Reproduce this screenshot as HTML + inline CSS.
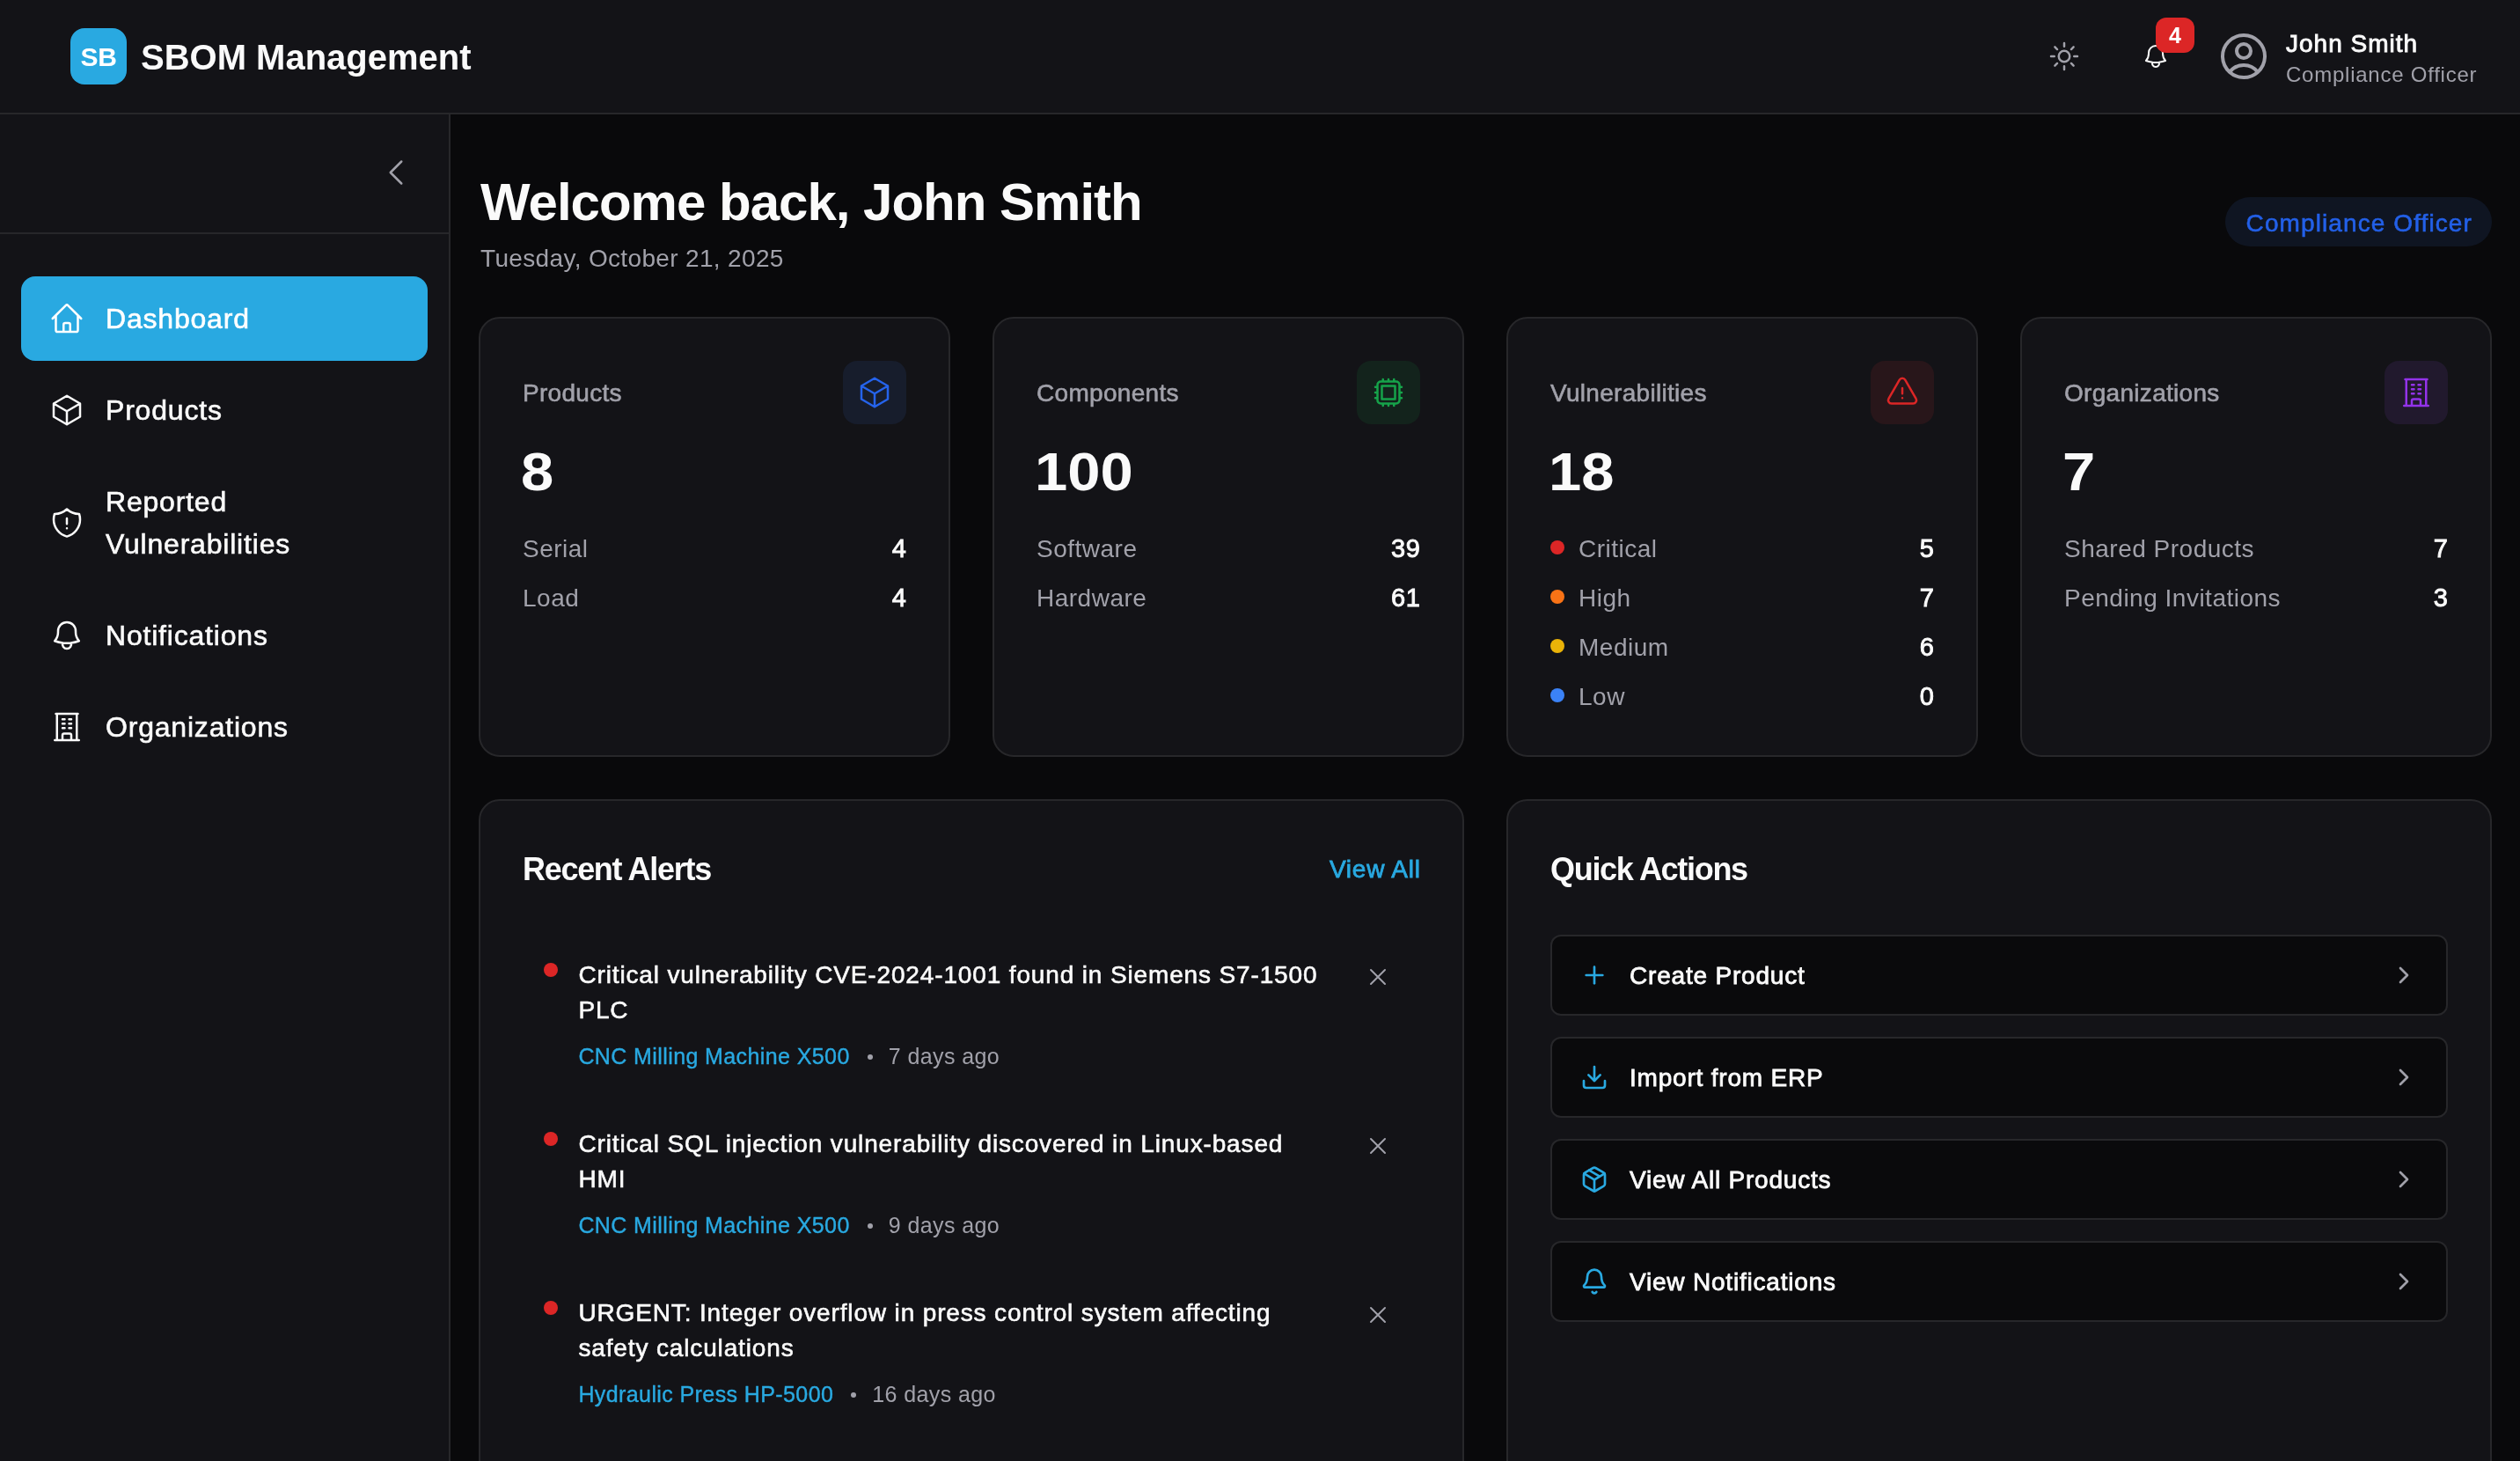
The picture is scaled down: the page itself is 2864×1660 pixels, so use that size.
<!DOCTYPE html>
<html>
<head>
<meta charset="utf-8">
<style>
html{zoom:2}
@media (max-width:1500px){html{zoom:1}}
*{box-sizing:border-box;margin:0;padding:0}
html,body{width:1432px;height:830px;overflow:hidden;background:#09090b}
body{will-change:transform}
body{font-family:"Liberation Sans",sans-serif;color:#fafafa;position:relative}
.abs{position:absolute}
.med{-webkit-text-stroke:.3px currentColor}
svg{display:block;fill:none;stroke:currentColor;stroke-width:1.5;stroke-linecap:round;stroke-linejoin:round}
#hdr{left:0;top:0;width:1432px;height:65px;background:#131317;border-bottom:1px solid #27272a}
#side{left:0;top:65px;width:256px;height:765px;background:#131317;border-right:1px solid #27272a}
.logo{left:40px;top:16px;width:32px;height:32px;border-radius:8px;background:#29a9e1;color:#fff;font-weight:700;font-size:15px;line-height:33px;text-align:center;letter-spacing:-.2px}
.brand{left:80px;top:18.5px;font-size:20px;font-weight:700;line-height:28px;white-space:nowrap}
.collapse{left:0;top:0;width:255px;height:68px;border-bottom:1px solid #27272a}
.nav{left:12px;width:231px;height:48px;border-radius:8px;display:flex;align-items:center;padding-left:16px;font-size:16px;line-height:24px;color:#fafafa;letter-spacing:.4px}
.nav svg{width:20px;height:20px;margin-right:12px;flex:none}
.nav.active{background:#29a9e1;color:#fff}
.card{background:#131317;border:1px solid #27272a;border-radius:12px}
.lbl{font-size:14px;line-height:20px;color:#a1a1aa;letter-spacing:.15px;-webkit-text-stroke:.3px currentColor}
.ibox{width:36px;height:36px;border-radius:8px;display:flex;align-items:center;justify-content:center}
.ibox svg{width:20px;height:20px}
.num{font-size:31px;line-height:36px;font-weight:700;color:#fafafa;transform:scaleX(1.08);transform-origin:0 0}
.row{display:flex;justify-content:space-between;font-size:14px;line-height:20px;color:#a1a1aa;height:20px;letter-spacing:.25px}
.row b{color:#fafafa;font-weight:400;-webkit-text-stroke:.45px currentColor;font-size:14.5px;letter-spacing:.4px;margin-right:-.4px;position:relative;top:-.7px}
.dot{width:8px;height:8px;border-radius:50%;display:inline-block;margin-right:8px;vertical-align:1.5px}
.sec{font-size:18px;line-height:28px;font-weight:700;color:#fafafa;letter-spacing:-.65px}
.alert{left:24px;width:510px;padding:12px}
.alert .d{position:absolute;left:12px;top:16px;width:8px;height:8px;border-radius:50%;background:#dc2626}
.alert .t{position:relative;top:.8px;margin-left:19.7px;font-size:14px;line-height:20px;color:#fafafa;width:460px;letter-spacing:.43px;-webkit-text-stroke:.3px currentColor}
.alert .m{position:relative;top:1.2px;margin-left:19.7px;margin-top:8px;font-size:12.5px;line-height:16px;color:#a1a1aa;white-space:nowrap;letter-spacing:.2px;display:flex;align-items:center}
.alert .m i{display:inline-block;width:3px;height:3px;border-radius:50%;background:#a1a1aa;margin:.5px 9px 0 10px}
.alert .m a{color:#29a9e1;text-decoration:none;-webkit-text-stroke:.2px currentColor}
.alert .x{position:absolute;right:16px;top:16px;width:16px;height:16px;color:#a1a1aa}
.qa{left:24px;width:510px;height:46px;border:1px solid #27272a;border-radius:6px;background:#0a0a0c;display:flex;align-items:center;padding:0 16px;font-size:14px;line-height:20px;color:#fafafa;letter-spacing:.4px;-webkit-text-stroke:.4px currentColor}
.qa .ic{width:16px;height:16px;color:#29a9e1;margin-right:12px;flex:none}
.qa .tx{position:relative;top:.6px}
.qa .ch{width:16px;height:16px;color:#a1a1aa;margin-left:auto;flex:none}
</style>
</head>
<body>
<!-- HEADER -->
<div id="hdr" class="abs">
  <div class="abs logo">SB</div>
  <div class="abs brand">SBOM Management</div>
  <div class="abs" style="left:1163px;top:22px;width:20px;height:20px;color:#a1a1aa"><svg viewBox="0 0 24 24" width="20" height="20"><path d="M12 3v2.25m6.364.386-1.591 1.591M21 12h-2.25m-.386 6.364-1.591-1.591M12 18.75V21m-4.773-4.227-1.591 1.591M5.25 12H3m4.227-4.773L5.636 5.636M15.75 12a3.75 3.75 0 1 1-7.5 0 3.75 3.75 0 0 1 7.5 0Z"/></svg></div>
  <div class="abs" style="left:1217px;top:24px;width:16px;height:16px;color:#fafafa"><svg viewBox="0 0 24 24" width="16" height="16"><path d="M14.857 17.082a23.848 23.848 0 0 0 5.454-1.31A8.967 8.967 0 0 1 18 9.75V9A6 6 0 0 0 6 9v.75a8.967 8.967 0 0 1-2.312 6.022c1.733.64 3.56 1.085 5.455 1.31m5.714 0a24.255 24.255 0 0 1-5.714 0m5.714 0a3 3 0 1 1-5.714 0"/></svg></div>
  <div class="abs" style="left:1225px;top:10px;width:22px;height:20px;border-radius:6px;background:#dc2626;color:#fff;font-size:12.5px;font-weight:700;line-height:20px;text-align:center">4</div>
  <div class="abs" style="left:1259px;top:16px;width:32px;height:32px;color:#a1a1aa"><svg viewBox="0 0 24 24" width="32" height="32"><path d="M17.982 18.725A7.488 7.488 0 0 0 12 15.75a7.488 7.488 0 0 0-5.982 2.975m11.964 0a9 9 0 1 0-11.963 0m11.963 0A8.966 8.966 0 0 1 12 21a8.966 8.966 0 0 1-5.982-2.275M15 9.75a3 3 0 1 1-6 0 3 3 0 0 1 6 0Z"/></svg></div>
  <div class="abs" style="left:1299px;top:15px;font-size:14px;line-height:20px;font-weight:400;-webkit-text-stroke:.45px currentColor;white-space:nowrap;letter-spacing:.5px">John Smith</div>
  <div class="abs" style="left:1299px;top:34.3px;font-size:12px;line-height:16px;color:#a1a1aa;white-space:nowrap;letter-spacing:.38px">Compliance Officer</div>
</div>
<!-- SIDEBAR -->
<div id="side" class="abs">
  <div class="abs collapse"></div>
  <div class="abs" style="left:215px;top:23px;width:20px;height:20px;color:#a1a1aa"><svg viewBox="0 0 24 24" width="20" height="20"><path d="M15.75 19.5 8.25 12l7.5-7.5"/></svg></div>
  <div class="abs med nav active" style="top:92px"><svg viewBox="0 0 24 24"><path d="m2.25 12 8.954-8.955c.44-.439 1.152-.439 1.591 0L21.75 12M4.5 9.75v10.125c0 .621.504 1.125 1.125 1.125H9.75v-4.875c0-.621.504-1.125 1.125-1.125h2.25c.621 0 1.125.504 1.125 1.125V21h4.125c.621 0 1.125-.504 1.125-1.125V9.75M8.25 21h8.25"/></svg>Dashboard</div>
  <div class="abs med nav" style="top:144px"><svg viewBox="0 0 24 24"><path d="m21 7.5-9-5.25L3 7.5m18 0-9 5.25m9-5.25v9l-9 5.25M3 7.5l9 5.25M3 7.5v9l9 5.25m0-9v9"/></svg>Products</div>
  <div class="abs med nav" style="top:196px;height:72px"><svg viewBox="0 0 24 24"><path d="M12 9v3.75m0-10.036A11.959 11.959 0 0 1 3.598 6 11.99 11.99 0 0 0 3 9.75c0 5.592 3.824 10.29 9 11.622 5.176-1.332 9-6.03 9-11.622 0-1.31-.21-2.57-.598-3.75h-.152c-3.196 0-6.1-1.25-8.25-3.286Zm0 13.036h.008v.008H12v-.008Z"/></svg><span>Reported<br>Vulnerabilities</span></div>
  <div class="abs med nav" style="top:272px"><svg viewBox="0 0 24 24"><path d="M14.857 17.082a23.848 23.848 0 0 0 5.454-1.31A8.967 8.967 0 0 1 18 9.75V9A6 6 0 0 0 6 9v.75a8.967 8.967 0 0 1-2.312 6.022c1.733.64 3.56 1.085 5.455 1.31m5.714 0a24.255 24.255 0 0 1-5.714 0m5.714 0a3 3 0 1 1-5.714 0"/></svg>Notifications</div>
  <div class="abs med nav" style="top:324px"><svg viewBox="0 0 24 24"><path d="M3.75 21h16.5M4.5 3h15M5.25 3v18m13.5-18v18M9 6.75h1.5m-1.5 3h1.5m-1.5 3h1.5m3-6H15m-1.5 3H15m-1.5 3H15M9 21v-3.375c0-.621.504-1.125 1.125-1.125h3.75c.621 0 1.125.504 1.125 1.125V21"/></svg>Organizations</div>
</div>
<!-- MAIN -->
<div class="abs" style="left:272px;top:97px;font-size:30px;line-height:36px;font-weight:700;white-space:nowrap;letter-spacing:-.5px;margin-left:1px">Welcome back, John Smith</div>
<div class="abs" style="left:272px;top:137px;font-size:14px;line-height:20px;color:#a1a1aa;white-space:nowrap;letter-spacing:.17px;margin-left:1px">Tuesday, October 21, 2025</div>
<div class="abs" style="left:1264.5px;top:112px;width:151.5px;height:28px;border-radius:14px;background:#0f1522;color:#2360e8;font-size:14px;line-height:29.8px;padding-left:.8px;text-align:center;white-space:nowrap;letter-spacing:.55px;-webkit-text-stroke:.3px currentColor">Compliance Officer</div>
<div class="abs card" style="left:272px;top:180px;width:268px;height:250px">
 <div class="abs lbl" style="left:24px;top:32.6px">Products</div>
 <div class="abs ibox" style="right:24px;top:24px;background:#171d2c;color:#2563eb"><svg viewBox="0 0 24 24"><path d="m21 7.5-9-5.25L3 7.5m18 0-9 5.25m9-5.25v9l-9 5.25M3 7.5l9 5.25M3 7.5v9l9 5.25m0-9v9"/></svg></div>
 <div class="abs num" style="left:23px;top:69px">8</div>
 <div class="abs row" style="left:24px;right:24px;top:121px"><span>Serial</span><b>4</b></div>
 <div class="abs row" style="left:24px;right:24px;top:149px"><span>Load</span><b>4</b></div>
</div>
<div class="abs card" style="left:564px;top:180px;width:268px;height:250px">
 <div class="abs lbl" style="left:24px;top:32.6px">Components</div>
 <div class="abs ibox" style="right:24px;top:24px;background:#13231c;color:#16a34a"><svg viewBox="0 0 24 24"><path d="M8.25 3v1.5M4.5 8.25H3m18 0h-1.5M4.5 12H3m18 0h-1.5m-15 3.75H3m18 0h-1.5M8.25 19.5V21M12 3v1.5m0 15V21m3.75-18v1.5m0 15V21m-9-1.5h10.5a2.25 2.25 0 0 0 2.25-2.25V6.75a2.25 2.25 0 0 0-2.25-2.25H6.75A2.25 2.25 0 0 0 4.5 6.75v10.5a2.25 2.25 0 0 0 2.25 2.25Zm.75-12h9v9h-9v-9Z"/></svg></div>
 <div class="abs num" style="left:23px;top:69px">100</div>
 <div class="abs row" style="left:24px;right:24px;top:121px"><span>Software</span><b>39</b></div>
 <div class="abs row" style="left:24px;right:24px;top:149px"><span>Hardware</span><b>61</b></div>
</div>
<div class="abs card" style="left:856px;top:180px;width:268px;height:250px">
 <div class="abs lbl" style="left:24px;top:32.6px">Vulnerabilities</div>
 <div class="abs ibox" style="right:24px;top:24px;background:#28161a;color:#dc2626"><svg viewBox="0 0 24 24"><path d="M12 9v3.75m-9.303 3.376c-.866 1.5.217 3.374 1.948 3.374h14.71c1.73 0 2.813-1.874 1.948-3.374L13.949 3.378c-.866-1.5-3.032-1.5-3.898 0L2.697 16.126ZM12 15.75h.007v.008H12v-.008Z"/></svg></div>
 <div class="abs num" style="left:23px;top:69px">18</div>
 <div class="abs row" style="left:24px;right:24px;top:121px"><span><span class="dot" style="background:#dc2626"></span>Critical</span><b>5</b></div>
 <div class="abs row" style="left:24px;right:24px;top:149px"><span><span class="dot" style="background:#f97316"></span>High</span><b>7</b></div>
 <div class="abs row" style="left:24px;right:24px;top:177px"><span><span class="dot" style="background:#eab308"></span>Medium</span><b>6</b></div>
 <div class="abs row" style="left:24px;right:24px;top:205px"><span><span class="dot" style="background:#3b82f6"></span>Low</span><b>0</b></div>
</div>
<div class="abs card" style="left:1148px;top:180px;width:268px;height:250px">
 <div class="abs lbl" style="left:24px;top:32.6px">Organizations</div>
 <div class="abs ibox" style="right:24px;top:24px;background:#21192d;color:#9333ea"><svg viewBox="0 0 24 24"><path d="M3.75 21h16.5M4.5 3h15M5.25 3v18m13.5-18v18M9 6.75h1.5m-1.5 3h1.5m-1.5 3h1.5m3-6H15m-1.5 3H15m-1.5 3H15M9 21v-3.375c0-.621.504-1.125 1.125-1.125h3.75c.621 0 1.125.504 1.125 1.125V21"/></svg></div>
 <div class="abs num" style="left:23px;top:69px">7</div>
 <div class="abs row" style="left:24px;right:24px;top:121px"><span>Shared Products</span><b>7</b></div>
 <div class="abs row" style="left:24px;right:24px;top:149px"><span>Pending Invitations</span><b>3</b></div>
</div>
<div class="abs card" style="left:272px;top:454px;width:560px;height:500px">
 <div class="abs sec" style="left:24px;top:24.8px">Recent Alerts</div>
 <div class="abs" style="right:23.6px;top:29px;font-size:14px;line-height:20px;color:#29a9e1;letter-spacing:.4px;-webkit-text-stroke:.4px currentColor">View All</div>
 <div class="abs alert" style="top:76px"><span class="d"></span><div class="t">Critical vulnerability CVE-2024-1001 found in Siemens S7-1500<br>PLC</div><div class="m"><a>CNC Milling Machine X500</a><i></i>7 days ago</div><span class="x"><svg viewBox="0 0 24 24"><path d="M6 18 18 6M6 6l12 12"/></svg></span></div>
 <div class="abs alert" style="top:172px"><span class="d"></span><div class="t">Critical SQL injection vulnerability discovered in Linux-based<br>HMI</div><div class="m"><a>CNC Milling Machine X500</a><i></i>9 days ago</div><span class="x"><svg viewBox="0 0 24 24"><path d="M6 18 18 6M6 6l12 12"/></svg></span></div>
 <div class="abs alert" style="top:268px"><span class="d"></span><div class="t">URGENT: Integer overflow in press control system affecting<br>safety calculations</div><div class="m"><a>Hydraulic Press HP-5000</a><i></i>16 days ago</div><span class="x"><svg viewBox="0 0 24 24"><path d="M6 18 18 6M6 6l12 12"/></svg></span></div>
</div>
<div class="abs card" style="left:856px;top:454px;width:560px;height:500px">
 <div class="abs sec" style="left:24px;top:24.8px">Quick Actions</div>
 <div class="abs qa" style="top:76px"><span class="ic"><svg viewBox="0 0 24 24" style="stroke-width:2"><path d="M5 12h14"/><path d="M12 5v14"/></svg></span><span class="tx">Create Product</span><span class="ch"><svg viewBox="0 0 24 24" style="stroke-width:2"><path d="m9 18 6-6-6-6"/></svg></span></div>
 <div class="abs qa" style="top:134px"><span class="ic"><svg viewBox="0 0 24 24" style="stroke-width:2"><path d="M12 15V3"/><path d="M21 15v4a2 2 0 0 1-2 2H5a2 2 0 0 1-2-2v-4"/><path d="m7 10 5 5 5-5"/></svg></span><span class="tx">Import from ERP</span><span class="ch"><svg viewBox="0 0 24 24" style="stroke-width:2"><path d="m9 18 6-6-6-6"/></svg></span></div>
 <div class="abs qa" style="top:192px"><span class="ic"><svg viewBox="0 0 24 24" style="stroke-width:2"><path d="M11 21.73a2 2 0 0 0 2 0l7-4A2 2 0 0 0 21 16V8a2 2 0 0 0-1-1.73l-7-4a2 2 0 0 0-2 0l-7 4A2 2 0 0 0 3 8v8a2 2 0 0 0 1 1.73z"/><path d="M12 22V12"/><path d="m3.3 7 7.703 4.734a2 2 0 0 0 1.994 0L20.7 7"/><path d="m7.5 4.27 9 5.15"/></svg></span><span class="tx">View All Products</span><span class="ch"><svg viewBox="0 0 24 24" style="stroke-width:2"><path d="m9 18 6-6-6-6"/></svg></span></div>
 <div class="abs qa" style="top:250px"><span class="ic"><svg viewBox="0 0 24 24" style="stroke-width:2"><path d="M10.268 21a2 2 0 0 0 3.464 0"/><path d="M3.262 15.326A1 1 0 0 0 4 17h16a1 1 0 0 0 .74-1.673C19.41 13.956 18 12.499 18 8A6 6 0 0 0 6 8c0 4.499-1.411 5.956-2.738 7.326"/></svg></span><span class="tx">View Notifications</span><span class="ch"><svg viewBox="0 0 24 24" style="stroke-width:2"><path d="m9 18 6-6-6-6"/></svg></span></div>
</div>
</body>
</html>
